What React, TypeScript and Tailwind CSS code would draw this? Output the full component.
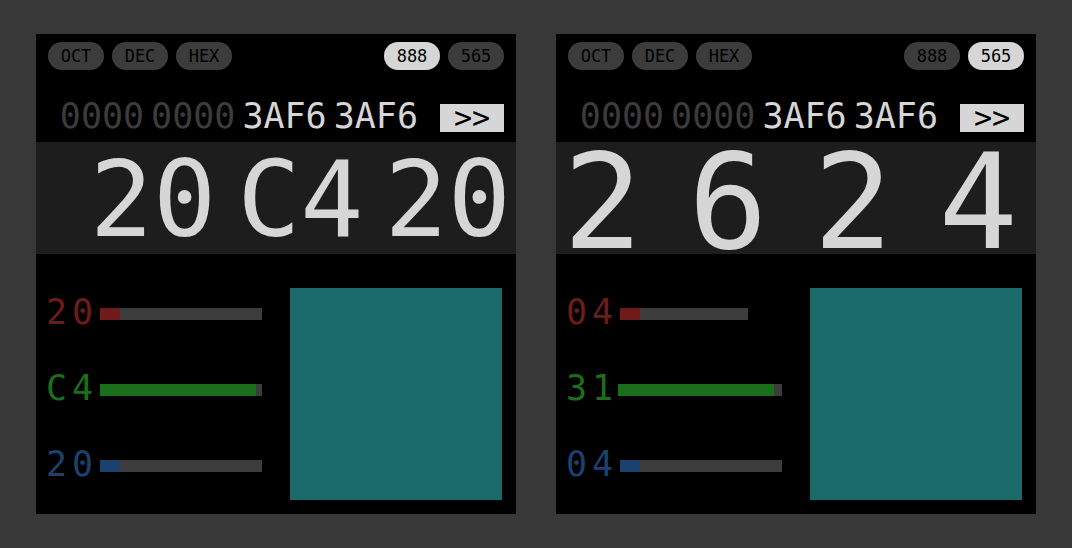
import { useState } from "react";

type Format = "888" | "565";

type Channel = {
  name: string;
  digits: string;
  value: number;
  max: number;
  text: string;
  color: string;
  track: string;
};

type Converter = {
  format: Format;
  input: string[];
  channels: Channel[];
};

const RED = "#6f1b1b";
const GREEN = "#1b6f1b";
const BLUE = "#1b426f";

const converters: Converter[] = [
  {
    format: "888",
    input: ["0000", "0000", "3AF6", "3AF6"],
    channels: [
      { name: "Red", digits: "20", value: 20, max: 162, text: "text-[#6f1b1b]", color: RED, track: "w-[162px]" },
      { name: "Green", digits: "C4", value: 156, max: 162, text: "text-[#1b6f1b]", color: GREEN, track: "w-[162px]" },
      { name: "Blue", digits: "20", value: 20, max: 162, text: "text-[#1b426f]", color: BLUE, track: "w-[162px]" },
    ],
  },
  {
    format: "565",
    input: ["0000", "0000", "3AF6", "3AF6"],
    channels: [
      { name: "Red", digits: "04", value: 20, max: 128, text: "text-[#6f1b1b]", color: RED, track: "mr-[34px] w-[128px]" },
      { name: "Green", digits: "31", value: 156, max: 164, text: "text-[#1b6f1b]", color: GREEN, track: "w-[164px]" },
      { name: "Blue", digits: "04", value: 20, max: 162, text: "text-[#1b426f]", color: BLUE, track: "w-[162px]" },
    ],
  },
];

function Pill({ label, active = false, onClick }: { label: string; active?: boolean; onClick?: () => void }) {
  return (
    <button
      type="button"
      aria-pressed={active}
      onClick={onClick}
      className={`flex h-7 w-14 items-center justify-center rounded-full text-[17px] leading-7 text-black ${
        active ? "bg-[#d6d6d6]" : "bg-[#3c3c3c]"
      }`}
    >
      {label}
    </button>
  );
}

function ChannelRow({ channel, id }: { channel: Channel; id: string }) {
  const [value, setValue] = useState(channel.value);
  const fill = (value / channel.max) * 100;
  return (
    <div className="flex h-[52px] w-[216px] items-center justify-between">
      <label htmlFor={id} aria-label={channel.name} className={`flex shrink-0 gap-[5px] self-start text-[35px] leading-[48px] ${channel.text}`}>
        {channel.digits.split("").map((digit, i) => (
          <span key={i}>{digit}</span>
        ))}
      </label>
      <input
        id={id}
        type="range"
        min={0}
        max={channel.max}
        value={value}
        onChange={(e) => setValue(Number(e.target.value))}
        style={{ backgroundImage: `linear-gradient(to right, ${channel.color} ${fill}%, #3c3c3c ${fill}%)` }}
        className={`h-3 shrink-0 cursor-pointer appearance-none [&::-webkit-slider-thumb]:h-3 [&::-webkit-slider-thumb]:w-1 [&::-webkit-slider-thumb]:appearance-none [&::-webkit-slider-thumb]:opacity-0 ${channel.track}`}
      />
    </div>
  );
}

function Panel({ converter }: { converter: Converter }) {
  const [format, setFormat] = useState<Format>(converter.format);
  return (
    <section className="min-w-[480px] flex-1 overflow-hidden bg-black pt-2 pb-[14px]">
      <div className="flex justify-between px-3">
        <div className="flex gap-2">
          <Pill label="OCT" />
          <Pill label="DEC" />
          <Pill label="HEX" />
        </div>
        <div className="flex gap-2">
          <Pill label="888" active={format === "888"} onClick={() => setFormat("888")} />
          <Pill label="565" active={format === "565"} onClick={() => setFormat("565")} />
        </div>
      </div>

      <div className="mt-[34px] flex h-7 items-start justify-end gap-[22px] px-3">
        <div className="flex gap-[7px] text-[35px] leading-6">
          {converter.input.map((group, i) => (
            <span key={i} className={i < 2 ? "text-[#3c3c3c]" : "text-[#d6d6d6]"}>
              {group}
            </span>
          ))}
        </div>
        <button type="button" aria-label="Convert" className="flex h-7 w-16 items-center justify-center bg-[#d6d6d6] text-[30px] leading-6 text-black">
          &gt;&gt;
        </button>
      </div>

      {converter.format === "888" ? (
        <div className="mt-[10px] flex h-28 items-center justify-end gap-[21px] bg-[#1d1d1d] pt-1 pr-[5px] text-[105px] leading-[104px] text-[#d6d6d6]">
          <span>20</span>
          <span>C4</span>
          <span>20</span>
        </div>
      ) : (
        <div className="mt-[10px] flex h-28 items-center justify-between bg-[#1d1d1d] pt-2 pr-[18px] pl-[7px] text-[132px] leading-[104px] text-[#d6d6d6]">
          <span>2</span>
          <span>6</span>
          <span>2</span>
          <span>4</span>
        </div>
      )}

      <div className="mt-[34px] flex justify-between pr-[14px] pl-[10px]">
        <div className="flex flex-col gap-6">
          {converter.channels.map((channel) => (
            <ChannelRow key={channel.name} channel={channel} id={`${converter.format}-${channel.name}`} />
          ))}
        </div>
        <div className="size-[212px] shrink-0 bg-[#1b6a6a]" />
      </div>
    </section>
  );
}

export default function App() {
  return (
    <main className="flex min-h-screen flex-wrap content-start items-start gap-10 bg-[#383838] px-9 py-[34px] font-['DejaVu_Sans_Mono',monospace]">
      {converters.map((converter) => (
        <Panel key={converter.format} converter={converter} />
      ))}
    </main>
  );
}
